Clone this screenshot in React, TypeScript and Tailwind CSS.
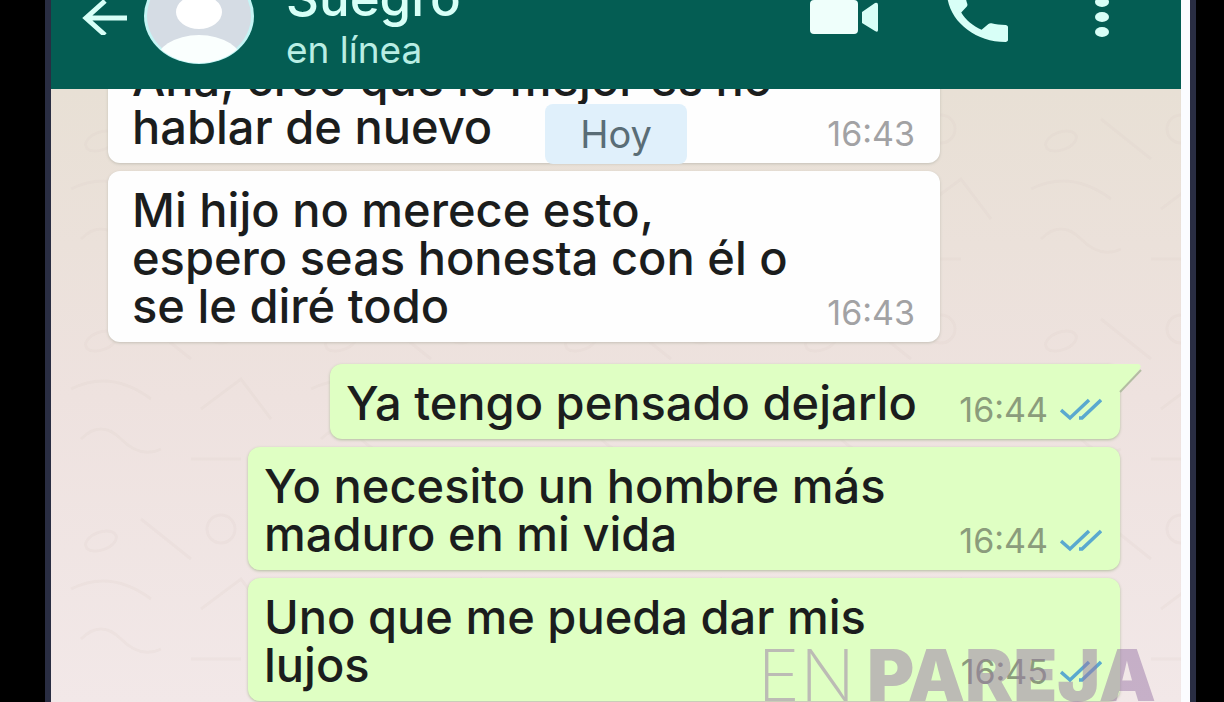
import React from "react";

type Message = {
  lines: string[];
  time: string;
  mine?: boolean;
  tail?: boolean;
  width: string;
};

const messages: Message[] = [
  { lines: ["Ana, creo que lo mejor es no", "hablar de nuevo"], time: "16:43", width: "w-[832px] pb-[12px]" },
  { lines: ["Mi hijo no merece esto,", "espero seas honesta con él o", "se le diré todo"], time: "16:43", width: "w-[832px] pb-[12px]" },
  { lines: ["Ya tengo pensado dejarlo"], time: "16:44", mine: true, tail: true, width: "w-[790px] mt-[14px] pb-[12px]" },
  { lines: ["Yo necesito un hombre más", "maduro en mi vida"], time: "16:44", mine: true, width: "w-[872px] pb-[12px]" },
  { lines: ["Uno que me pueda dar mis", "lujos"], time: "16:45", mine: true, width: "w-[872px] pb-[12px]" },
];

function Ticks() {
  return (
    <svg width="42" height="24" viewBox="0 0 42 24" fill="none" stroke="#5aa9cf" strokeWidth="3.5" aria-hidden="true">
      <path d="M1 12 L10 20 L29 2" />
      <path d="M19 20 L22 20 L41 2" />
    </svg>
  );
}

function Bubble({ message }: { message: Message }) {
  const { lines, time, mine, tail, width } = message;
  const tone = mine
    ? "self-end bg-[#dfffc3] pl-[16px] pr-[18px] shadow-[0_1px_3px_#b4bda0]"
    : "self-start bg-[#fefefe] pl-[24px] pr-[25px] shadow-[0_1px_3px_#c4c0b6]";
  return (
    <article className={`relative flex max-w-full shrink-0 items-end justify-between rounded-xl pt-[15px] ${tone} ${width}`}>
      {tail && (
        <svg className="absolute top-0 -right-[23px]" width="36" height="32" viewBox="0 0 36 32" aria-hidden="true">
          <path d="M0 0 H31 Q36 1 32 6 L13 28 V32 H0 Z" fill="#dfffc3" />
          <path d="M34 6 L13 28" stroke="#b3bda2" strokeWidth="2" fill="none" />
        </svg>
      )}
      <p className="text-[47px] leading-[48px] font-medium whitespace-nowrap text-[#1b1d1d]">
        {lines.map((line) => (
          <span key={line} className="block">{line}</span>
        ))}
      </p>
      <span className={`flex items-center gap-3 text-[34px] leading-[34px] ${mine ? "text-[#8b9c7c]" : "text-[#a2a2a4]"}`}>
        <time>{time}</time>
        {mine && <Ticks />}
      </span>
    </article>
  );
}

function Header() {
  return (
    <header className="relative z-10 mr-[9px] h-[89px] shrink-0 overflow-hidden bg-[#045d53]">
      <div className="-mt-[35px] flex h-[102px] items-center pr-[71px] pl-[31px] text-[#d8fff7]">
        <button aria-label="Atrás" className="shrink-0">
          <svg width="46" height="38" viewBox="0 0 46 38" fill="none" stroke="currentColor" strokeWidth="5">
            <path d="M45 21 H5 M23 4 L4 21 L23 38" />
          </svg>
        </button>
        <svg className="ml-4 shrink-0" width="110" height="96" viewBox="0 0 110 96" aria-hidden="true">
          <defs>
            <clipPath id="avatar"><ellipse cx="55" cy="48" rx="54" ry="47" /></clipPath>
          </defs>
          <ellipse cx="55" cy="48" rx="55" ry="48" fill="#c5f5f5" />
          <g clipPath="url(#avatar)">
            <ellipse cx="55" cy="48" rx="52" ry="46" fill="#d5dce4" />
            <ellipse cx="55" cy="44" rx="23" ry="17" fill="#fff" />
            <ellipse cx="55" cy="95" rx="44" ry="28" fill="#fafffe" />
          </g>
        </svg>
        <div className="ml-8 flex grow flex-col gap-2 pt-[11px]">
          <h1 className="text-[51px] leading-[48px] font-medium">Suegro</h1>
          <p className="text-[37px] leading-[40px] text-[#b9eee4]">en línea</p>
        </div>
        <div className="flex shrink-0 items-center">
          <button aria-label="Videollamada">
            <svg width="70" height="36" viewBox="0 0 70 36" fill="currentColor">
              <rect x="1" y="2" width="48" height="34" rx="4" fill="#effffb" />
              <path d="M53 14 L66 5 Q69 4 69 7 V32 Q69 35 66 33 L53 25 Z" />
            </svg>
          </button>
          <button aria-label="Llamar" className="ml-[68px]">
            <svg width="61" height="52" viewBox="0 0 24 24" preserveAspectRatio="none" fill="currentColor">
              <path d="M5.6 10.4c1.7 3.4 4.6 6.2 8 8l2.700-2.700c.3-.3.8-.4 1.200-.3 1.700.5 3.500.7 5.500.8.6 0 1 .5 1 1V23c0 .6-.4 1-1 1C10.500 24 0 13.500 0 1c0-.6.4-1 1-1h5.200c.6 0 1 .4 1 1 0 2 .3 3.800.8 5.500.1.4 0 .8-.2 1.100z" />
            </svg>
          </button>
          <button aria-label="Más opciones" className="ml-[86px]">
            <svg width="16" height="42" viewBox="0 0 16 42" fill="currentColor">
              <ellipse cx="8" cy="7" rx="7" ry="5" />
              <ellipse cx="8" cy="22" rx="7" ry="5" />
              <ellipse cx="8" cy="37" rx="7" ry="5" />
            </svg>
          </button>
        </div>
      </div>
    </header>
  );
}

function Wallpaper() {
  return (
    <svg className="absolute inset-0 h-full w-full" aria-hidden="true">
      <defs>
        <pattern id="doodles" width="240" height="200" patternUnits="userSpaceOnUse">
          <g fill="none" stroke="#d9cdc4" strokeWidth="3" opacity="0.2">
            <ellipse cx="50" cy="52" rx="16" ry="9" transform="rotate(-20 50 52)" />
            <path d="M90 30 L140 70 M20 100 Q60 80 100 110 M150 120 L190 90 L220 130" />
            <circle cx="170" cy="40" r="14" />
            <path d="M30 150 Q50 130 70 150 T110 160 M140 170 H190" />
          </g>
        </pattern>
      </defs>
      <rect width="100%" height="100%" fill="url(#doodles)" />
    </svg>
  );
}

export default function App() {
  return (
    <div className="h-screen overflow-hidden bg-black pr-[28px] pl-[45px] font-['Inter',sans-serif]">
      <div className="relative flex h-full flex-col overflow-hidden border-x-[6px] border-[#292d42] bg-[#fbfcff]">
        <Header />
        <main className="relative mr-[9px] min-h-0 grow overflow-hidden bg-linear-to-b from-[#e8e0d5] via-[#eee2df] to-[#f2e8e8]">
          <Wallpaper />
          <div className="relative -mt-[49px] flex flex-col gap-2 pr-[61px] pl-[57px]">
            {messages.map((message) => (
              <Bubble key={message.lines[0]} message={message} />
            ))}
          </div>
          <div className="absolute top-[15px] left-1/2 -ml-[71px] w-[142px] rounded-lg bg-[#e0f0fb] py-[10px] text-center text-[38px] leading-[40px] text-[#5a6d76]">
            Hoy
          </div>
        </main>
        <div className="absolute right-[34px] bottom-0 z-10 flex gap-3 text-[72px] leading-[54px] whitespace-nowrap text-[#9a78a8]/50">
          <span className="font-extralight">EN</span>
          <span className="font-black">PAREJA</span>
        </div>
      </div>
    </div>
  );
}
